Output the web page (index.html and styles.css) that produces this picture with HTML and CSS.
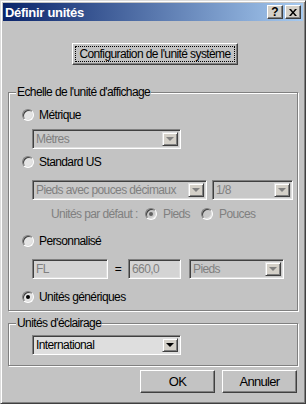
FILE: index.html
```html
<!DOCTYPE html>
<html lang="fr">
<head>
  <meta charset="UTF-8">
  <title>Définir unités</title>
  <link rel="stylesheet" href="styles.css">
</head>
<body>
  <div class="window">
    <div class="titlebar">
      <span class="title">Définir unités</span>
      <span class="tb-btn help">?</span>
      <span class="tb-btn close">
        <svg width="8" height="7" viewBox="0 0 8 7"><path d="M0 0h2l2 2.5L6 0h2L5 3.5 8 7H6L4 4.5 2 7H0l3-3.5z" fill="#000"/></svg>
      </span>
    </div>

    <div class="content">
      <div class="config-row">
        <button class="btn config"><span class="focus">Configuration de l'unité système</span></button>
      </div>

      <!-- Echelle -->
      <div class="group scale">
        <div class="legend">Echelle de l'unité d'affichage</div>

        <div class="opt metric"><span class="radio"></span>Métrique</div>
        <div class="combo off w-metres"><span class="combo-text">Mètres</span><span class="combo-btn"><i class="arrow"></i></span></div>

        <div class="opt us"><span class="radio"></span>Standard US</div>
        <div class="combo-row">
          <div class="combo off w-pieds"><span class="combo-text">Pieds avec pouces décimaux</span><span class="combo-btn"><i class="arrow"></i></span></div>
          <div class="combo off w-frac"><span class="combo-text">1/8</span><span class="combo-btn"><i class="arrow"></i></span></div>
        </div>
        <div class="default-row">
          <span class="default-label">Unités par défaut :</span>
          <span class="radio dim checked"></span><span class="dim-label pieds">Pieds</span>
          <span class="radio dim"></span><span class="dim-label">Pouces</span>
        </div>

        <div class="opt custom"><span class="radio"></span>Personnalisé</div>
        <div class="custom-row">
          <span class="field w-fl">FL</span>
          <span class="equal">=</span>
          <span class="field w-val">660,0</span>
          <div class="combo off w-unit"><span class="combo-text">Pieds</span><span class="combo-btn"><i class="arrow"></i></span></div>
        </div>

        <div class="opt generic"><span class="radio checked"></span>Unités génériques</div>
      </div>

      <!-- Eclairage -->
      <div class="group light">
        <div class="legend">Unités d'éclairage</div>
        <div class="combo on w-intl"><span class="combo-text">International</span><span class="combo-btn"><i class="arrow"></i></span></div>
      </div>

      <div class="actions">
        <button class="btn action">OK</button>
        <button class="btn action">Annuler</button>
      </div>
    </div>
  </div>
</body>
</html>
```

FILE: styles.css
```css
/* Base */
* {
  margin: 0;
  padding: 0;
  box-sizing: border-box;
}

body {
  font-family: 'Liberation Sans', Arial, sans-serif;
  font-size: 12px;
  letter-spacing: -0.6px;
  color: #000;
  background: #c3c3c3;
}

/* Fenêtre */
.window {
  width: 306px;
  height: 404px;
  border: 1px solid;
  border-color: #dcdcdc #404040 #404040 #dcdcdc;
  box-shadow: inset 1px 1px 0 #fff, inset -1px -1px 0 #808080;
  padding: 2px;
  background: #c3c3c3;
}

.titlebar {
  height: 18px;
  display: flex;
  align-items: center;
  padding: 0 2px;
  background: linear-gradient(to right, #0a246a, #a6caf0);
  color: #fff;
  font-size: 13px;
  font-weight: bold;
  letter-spacing: -0.3px;
}

.title {
  flex: 1;
}

.tb-btn {
  width: 16px;
  height: 14px;
  display: flex;
  align-items: center;
  justify-content: center;
  background: #d4d0c8;
  border: 1px solid;
  border-color: #fff #404040 #404040 #fff;
  box-shadow: inset -1px -1px 0 #808080;
  color: #000;
  font-size: 12px;
  line-height: 12px;
  letter-spacing: 0;
}

.tb-btn.help {
  margin-right: 2px;
}

.content {
  padding-left: 5px;
}

/* Boutons */
.btn {
  font: inherit;
  letter-spacing: inherit;
  color: #000;
  background: #c3c3c3;
  border: 1px solid;
  border-color: #fff #404040 #404040 #fff;
  box-shadow: inset -1px -1px 0 #808080;
  white-space: nowrap;
}

.config-row {
  padding-top: 22px;
}

.config {
  margin-left: 64px;
  width: 166px;
  height: 22px;
  padding: 2px;
  display: flex;
}

.config .focus {
  flex: 1;
  border: 1px dotted #000;
  line-height: 15px;
  text-align: center;
}

.action {
  width: 75px;
  height: 23px;
  font-size: 13px;
  letter-spacing: -0.7px;
}

/* Groupes */
.group {
  width: 290px;
  border: 1px solid #808080;
  box-shadow: 1px 1px 0 #fff, inset 1px 1px 0 #fff;
}

.group.scale {
  margin-top: 27px;
  height: 219px;
}

.group.light {
  margin-top: 12px;
  height: 43px;
}

.legend {
  width: fit-content;
  margin: -8px 0 0 7px;
  padding: 0 1px;
  line-height: 14px;
  background: #c3c3c3;
}

.opt {
  height: 16px;
  display: flex;
  align-items: center;
  gap: 5px;
  padding-left: 13px;
}

.opt.metric { margin-top: 8px; }
.opt.us { margin-top: 5px; }
.opt.custom { margin-top: 11px; }
.opt.generic { margin-top: 10px; }

/* Boutons radio */
.radio {
  width: 12px;
  height: 12px;
  flex: none;
  position: relative;
  border-radius: 50%;
  border: 1px solid;
  border-color: #808080 #fff #fff #808080;
  box-shadow: inset 1px 1px 0 #404040, inset -1px -1px 0 #dfdfdf;
  background: #e4e4e4;
}

.radio.dim {
  background: #c8c8c8;
}

.radio.checked::after {
  content: '';
  position: absolute;
  left: 3px;
  top: 3px;
  width: 4px;
  height: 4px;
  border-radius: 50%;
  background: #000;
}

.radio.dim.checked::after {
  background: #606060;
}

/* Listes déroulantes */
.combo {
  height: 20px;
  display: flex;
  padding: 2px;
  border: 1px solid;
  border-color: #808080 #fff #fff #808080;
  box-shadow: inset 1px 1px 0 #404040, inset -1px -1px 0 #dfdfdf;
}

.combo.off {
  background: #c8c8c8;
  color: #808080;
}

.combo.on {
  background: #dedede;
}

.combo-text {
  flex: 1;
  line-height: 14px;
  padding-left: 1px;
  white-space: nowrap;
  overflow: hidden;
}

.combo-btn {
  width: 16px;
  display: flex;
  align-items: center;
  justify-content: center;
  background: #d4d0c8;
  border: 1px solid;
  border-color: #dfdfdf #404040 #404040 #dfdfdf;
  box-shadow: inset 1px 1px 0 #fff, inset -1px -1px 0 #808080;
}

.arrow {
  width: 0;
  height: 0;
  border-left: 4px solid transparent;
  border-right: 4px solid transparent;
  border-top: 4px solid #000;
}

.off .arrow {
  border-top-color: #808080;
}

.w-metres {
  width: 149px;
  margin: 6px 0 0 23px;
}

.combo-row {
  display: flex;
  gap: 5px;
  margin: 10px 0 0 23px;
}

.w-pieds { width: 175px; }
.w-frac { width: 81px; }

.default-row {
  height: 16px;
  margin-top: 6px;
  padding-left: 42px;
  display: flex;
  align-items: center;
  color: #808080;
}

.default-label {
  width: 94px;
}

.dim-label {
  margin-left: 6px;
}

.dim-label.pieds {
  width: 38px;
}

/* Personnalisé */
.custom-row {
  display: flex;
  align-items: center;
  margin: 10px 0 0 23px;
}

.field {
  height: 20px;
  padding: 2px 3px;
  line-height: 14px;
  color: #808080;
  background: #d4d4d4;
  border: 1px solid;
  border-color: #808080 #fff #fff #808080;
  box-shadow: inset 1px 1px 0 #404040, inset -1px -1px 0 #dfdfdf;
}

.w-fl { width: 76px; }
.w-val { width: 53px; }

.equal {
  width: 20px;
  text-align: center;
}

.w-unit {
  width: 95px;
  margin-left: 8px;
}

.w-intl {
  width: 149px;
  margin: 5px 0 0 23px;
}

/* Actions */
.actions {
  display: flex;
  justify-content: flex-end;
  gap: 7px;
  margin-top: 4px;
  padding-right: 6px;
}
```
